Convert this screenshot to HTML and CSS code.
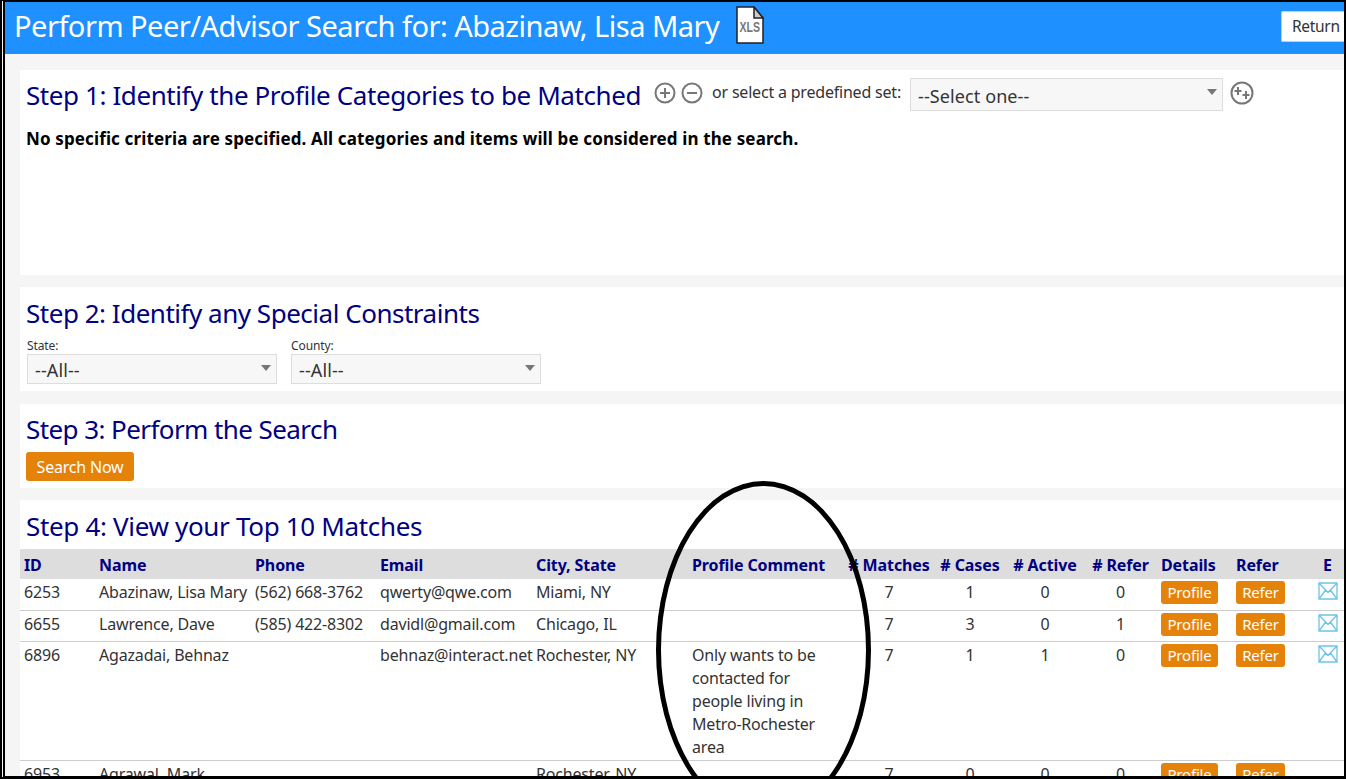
FILE: index.html
```html
<!DOCTYPE html>
<html lang="en">
<head>
<meta charset="utf-8">
<title>Perform Peer/Advisor Search</title>
<link rel="stylesheet" href="styles.css">
</head>
<body>
<div class="frame">
  <header class="topbar">
    <h1 class="page-title">Perform Peer/Advisor Search for: Abazinaw, Lisa Mary</h1>
    <svg class="xls-icon" viewBox="0 0 28 38" aria-hidden="true">
      <path d="M1 1H18L27 12V37H1Z" fill="#fff" stroke="#222" stroke-width="1.5"/>
      <path d="M18 1V12H27Z" fill="#ccc" stroke="#222" stroke-width="1.5"/>
      <text class="xls-text" transform="translate(3.5 26) scale(.96 1.3)">XLS</text>
    </svg>
    <button class="return-btn">Return</button>
  </header>
  <main class="content">
    <section class="panel panel-1">
      <div class="step-head">
        <h2 class="step-title">Step 1: Identify the Profile Categories to be Matched</h2>
        <svg class="round-icon" viewBox="0 0 22 22" aria-hidden="true"><circle cx="11" cy="11" r="9.5"/><path d="M11 6V16M6 11H16"/></svg>
        <svg class="round-icon" viewBox="0 0 22 22" aria-hidden="true"><circle cx="11" cy="11" r="9.5"/><path d="M6 11H16"/></svg>
        <span class="set-label">or select a predefined set:</span>
        <div class="select select-set">--Select one--<span class="caret"></span></div>
        <svg class="round-icon add-set" viewBox="0 0 24 24" aria-hidden="true"><circle cx="12" cy="12" r="10.5"/><path d="M8 6V14M4.5 10H11.5M16 10V18M12.5 14H19.5"/></svg>
      </div>
      <p class="notice">No specific criteria are specified. All categories and items will be considered in the search.</p>
    </section>
    <section class="panel panel-2">
      <h2 class="step-title">Step 2: Identify any Special Constraints</h2>
      <div class="filters">
        <div class="filter"><label class="filter-label">State:</label><div class="select select-filter">--All--<span class="caret"></span></div></div>
        <div class="filter"><label class="filter-label">County:</label><div class="select select-filter">--All--<span class="caret"></span></div></div>
      </div>
    </section>
    <section class="panel panel-3">
      <h2 class="step-title">Step 3: Perform the Search</h2>
      <button class="btn btn-search">Search Now</button>
    </section>
    <section class="panel panel-4">
      <h2 class="step-title title-4">Step 4: View your Top 10 Matches</h2>
      <table class="matches">
        <colgroup>
          <col class="c-id"><col class="c-name"><col class="c-phone"><col class="c-email"><col class="c-city"><col class="c-comment"><col class="c-num1"><col class="c-num2"><col class="c-num3"><col class="c-num4"><col class="c-details"><col class="c-refer"><col class="c-e">
        </colgroup>
        <thead>
          <tr><th>ID</th><th>Name</th><th>Phone</th><th>Email</th><th>City, State</th><th>Profile Comment</th><th class="num"># Matches</th><th class="num"># Cases</th><th class="num"># Active</th><th class="num"># Refer</th><th>Details</th><th>Refer</th><th class="num e-cell">E</th></tr>
        </thead>
        <tbody>
          <tr><td>6253</td><td>Abazinaw, Lisa Mary</td><td>(562) 668-3762</td><td>qwerty@qwe.com</td><td>Miami, NY</td><td></td><td class="num">7</td><td class="num">1</td><td class="num">0</td><td class="num">0</td><td><button class="btn btn-profile">Profile</button></td><td><button class="btn btn-refer">Refer</button></td><td class="num e-cell"><svg class="mail" viewBox="0 0 20 18" aria-hidden="true"><path d="M1 1H19V17H1ZM1 1 10 10.5 19 1M1 17 7.5 8M19 17 12.5 8"/></svg></td></tr>
          <tr><td>6655</td><td>Lawrence, Dave</td><td>(585) 422-8302</td><td>davidl@gmail.com</td><td>Chicago, IL</td><td></td><td class="num">7</td><td class="num">3</td><td class="num">0</td><td class="num">1</td><td><button class="btn btn-profile">Profile</button></td><td><button class="btn btn-refer">Refer</button></td><td class="num e-cell"><svg class="mail" viewBox="0 0 20 18" aria-hidden="true"><path d="M1 1H19V17H1ZM1 1 10 10.5 19 1M1 17 7.5 8M19 17 12.5 8"/></svg></td></tr>
          <tr><td>6896</td><td>Agazadai, Behnaz</td><td></td><td>behnaz@interact.net</td><td>Rochester, NY</td><td class="comment">Only wants to be contacted for people living in Metro-Rochester area</td><td class="num">7</td><td class="num">1</td><td class="num">1</td><td class="num">0</td><td><button class="btn btn-profile">Profile</button></td><td><button class="btn btn-refer">Refer</button></td><td class="num e-cell"><svg class="mail" viewBox="0 0 20 18" aria-hidden="true"><path d="M1 1H19V17H1ZM1 1 10 10.5 19 1M1 17 7.5 8M19 17 12.5 8"/></svg></td></tr>
          <tr><td>6953</td><td>Agrawal, Mark</td><td></td><td></td><td>Rochester, NY</td><td></td><td class="num">7</td><td class="num">0</td><td class="num">0</td><td class="num">0</td><td><button class="btn btn-profile">Profile</button></td><td><button class="btn btn-refer">Refer</button></td><td></td></tr>
        </tbody>
      </table>
    </section>
  </main>
  <div class="ellipse"></div>
</div>
</body>
</html>
```
FILE: styles.css
```css
* { box-sizing: border-box; }
html, body { margin: 0; height: 779px; overflow: hidden; background: #fff; }
body { font-family: "Noto Sans", "Open Sans", sans-serif; color: #333; }
.frame { position: relative; height: 779px; overflow: hidden; border-style: solid double solid double; border-color: #000; border-width: 2px 2px 3px 5px; background: #f5f5f5; }
.topbar { display: flex; align-items: center; height: 52px; background: #1e90ff; padding-left: 9px; }
.page-title { margin: -5px 0 0; font-size: 29px; line-height: 40px; font-weight: 400; color: #fff; letter-spacing: -0.5px; white-space: nowrap; }
.xls-icon { width: 28px; height: 38px; margin-left: 17px; margin-top: -6px; flex: none; }
.xls-text { font: 700 11px "Liberation Sans", sans-serif; fill: #777; }
.return-btn { margin-left: auto; width: 63px; height: 31px; margin-top: -4px; background: #fff; border: 1px solid #ccc; border-right: 0; padding: 0 0 0 10px; text-align: left; font: 400 15.5px "Noto Sans", sans-serif; color: #333; letter-spacing: -0.3px; border-radius: 2px 0 0 2px; }
.content { padding: 16px 0 0 15px; }
.panel { background: #fff; padding: 0 6px; }
.panel-1 { height: 205px; margin-bottom: 12px; }
.panel-2 { height: 104px; margin-bottom: 13px; }
.panel-3 { height: 84px; margin-bottom: 12px; }
.panel-4 { padding: 0; height: 300px; }
.step-head { display: flex; align-items: flex-start; height: 52px; }
.step-title { margin: 0; font-size: 26px; line-height: 36px; padding-top: 8px; font-weight: 400; color: #000080; letter-spacing: -0.41px; white-space: nowrap; height: 44px; box-sizing: content-box; }
.panel-1 .step-title { padding-top: 7px; }
.panel-2 .step-title { letter-spacing: -0.48px; }
.panel-3 .step-title { padding-top: 7px; letter-spacing: -0.58px; }
.round-icon { width: 22px; height: 22px; fill: none; stroke: #777; stroke-width: 2; flex: none; margin-top: 12px; }
.round-icon:first-of-type { margin-left: 13px; }
.round-icon + .round-icon { margin-left: 5px; }
.add-set { margin-left: 7px; width: 24px; height: 24px; margin-top: 11px; }
.set-label { margin: 11px 9px 0 9px; font-size: 16px; letter-spacing: -0.2px; white-space: nowrap; }
.select { position: relative; background: #f7f7f7; border: 1px solid #ddd; color: #333; padding-left: 7px; white-space: nowrap; font-size: 18px; letter-spacing: 0.1px; }
.select-set { width: 313px; height: 33px; line-height: 34px; margin-top: 8px; }
.select-filter { width: 250px; height: 30px; line-height: 30px; }
.caret { position: absolute; right: 5px; top: 10px; border: 5px solid transparent; border-top: 6px solid #777; border-bottom: 0; }
.notice { margin: 5px 0 0; font-size: 17px; line-height: 24px; font-weight: 700; color: #000; letter-spacing: 0.13px; white-space: nowrap; }
.filters { display: flex; gap: 14px; margin: 0 0 0 1px; }
.filter-label { display: block; font-size: 12px; line-height: 16px; color: #333; letter-spacing: -0.1px; margin-top: -1px; }
.btn { background: #e5820a; color: #fff; border: 0; border-radius: 3px; font-family: "Noto Sans", sans-serif; letter-spacing: -0.2px; padding: 0; display: block; }
.btn-search { width: 108px; height: 29px; font-size: 16px; margin-top: -3px; }
.title-4 { padding-left: 6px; height: 41px; letter-spacing: -0.33px; }
.matches { width: 1324px; border-collapse: collapse; table-layout: fixed; font-size: 16px; letter-spacing: -0.18px; }
.matches th { height: 30px; background: #ddd; color: #000080; font-weight: 700; text-align: left; padding: 1px 0 0 4px; white-space: nowrap; font-size: 16px; letter-spacing: -0.1px; }
.matches td { height: 31px; vertical-align: top; padding: 2px 0 0 4px; border-bottom: 1px solid #ccc; white-space: nowrap; color: #333; line-height: 23px; }
.matches .num { text-align: center; padding-left: 0; }
.matches .e-cell { padding-left: 4px; }
.matches td.comment { white-space: normal; padding-right: 20px; padding-bottom: 1px; }
.c-id { width: 75px; } .c-name { width: 156px; } .c-phone { width: 125px; } .c-email { width: 156px; } .c-city { width: 156px; } .c-comment { width: 156px; }
.c-num1 { width: 90px; } .c-num2 { width: 72px; } .c-num3 { width: 78px; } .c-num4 { width: 73px; } .c-details { width: 75px; } .c-refer { width: 75px; } .c-e { width: 37px; }
.btn-profile, .btn-refer { height: 23px; font-size: 15px; line-height: 23px; }
.btn-profile { width: 57px; }
.btn-refer { width: 49px; }
.mail { width: 20px; height: 18px; fill: #fff; stroke: #6cc3ec; stroke-width: 1.3; display: block; margin: 1px auto 0; }
.ellipse { position: absolute; left: 651px; top: 479px; width: 215px; height: 338px; border: 5px solid #000; border-radius: 50%; pointer-events: none; }
```
